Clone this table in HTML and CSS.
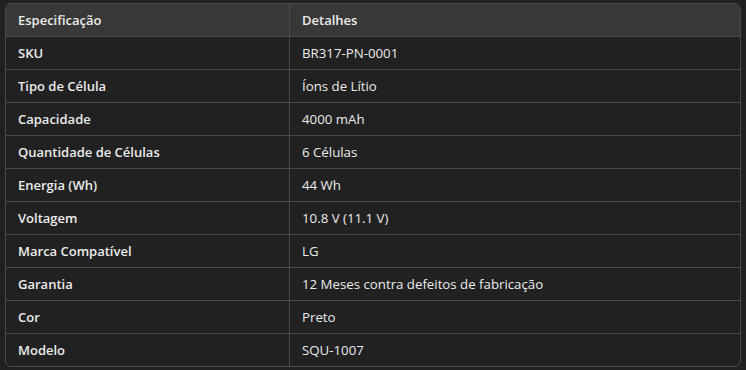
FILE: index.html
```html
<!DOCTYPE html>
<html lang="pt">
<head>
<meta charset="utf-8">
<link rel="stylesheet" href="styles.css">
</head>
<body>
<div class="wrap">
<table class="spec">
<thead>
<tr><th>Especificação</th><th>Detalhes</th></tr>
</thead>
<tbody>
<tr><td class="k">SKU</td><td>BR317-PN-0001</td></tr>
<tr><td class="k">Tipo de Célula</td><td>Íons de Lítio</td></tr>
<tr><td class="k">Capacidade</td><td>4000 mAh</td></tr>
<tr><td class="k">Quantidade de Células</td><td>6 Células</td></tr>
<tr><td class="k">Energia (Wh)</td><td>44 Wh</td></tr>
<tr><td class="k">Voltagem</td><td>10.8 V (11.1 V)</td></tr>
<tr><td class="k">Marca Compatível</td><td>LG</td></tr>
<tr><td class="k">Garantia</td><td>12 Meses contra defeitos de fabricação</td></tr>
<tr><td class="k">Cor</td><td>Preto</td></tr>
<tr><td class="k">Modelo</td><td>SQU-1007</td></tr>
</tbody>
</table>
</div>
</body>
</html>
```
FILE: styles.css
```css
html, body {
  margin: 0;
  padding: 0;
  background: #212121;
}
.wrap {
  padding: 3px 6px 0 5px;
}
.spec {
  width: 736px;
  border-collapse: separate;
  border-spacing: 0;
  border: 1px solid #4a4a4a;
  border-radius: 6px;
  overflow: hidden;
  font-family: "Open Sans", "Noto Sans", sans-serif;
  font-size: 13.25px;
  color: #ececec;
}
.spec th, .spec td {
  height: 33px;
  padding: 0 12px;
  text-align: left;
  vertical-align: middle;
  border-bottom: 1px solid #4a4a4a;
  box-sizing: border-box;
}
.spec th:first-child, .spec td:first-child {
  width: 284px;
  border-right: 1px solid #4a4a4a;
}
.spec th {
  background: #383838;
  font-weight: 600;
  font-size: 13px;
}
.spec td.k {
  font-weight: 600;
  font-size: 13px;
}
.spec tbody tr:last-child td {
  border-bottom: none;
  height: 32px;
}
```
